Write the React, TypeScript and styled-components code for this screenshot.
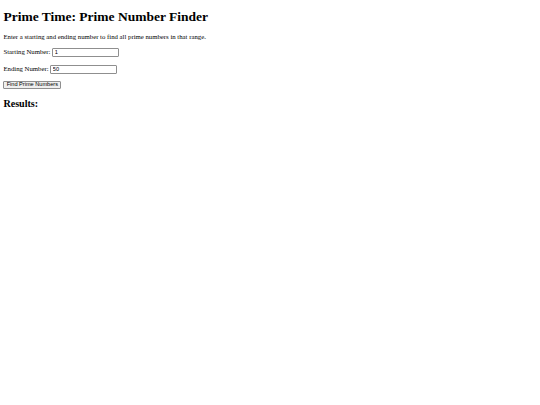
import React from "react";
import styled, { createGlobalStyle } from "styled-components";

const Global = createGlobalStyle`
  html, body { margin: 0; padding: 0; background: #fff; }
  body { font-family: "Liberation Serif", "Times New Roman", serif; color: #000; }
`;

const Page = styled.div`
  padding: 0 3.4px;
  display: flow-root;
`;

const Title = styled.h1`
  font-size: 13.5px;
  line-height: 15px;
  font-weight: bold;
  margin: 8.5px 0 0;
`;

const Text = styled.p`
  margin: 9px 0 0;
  font-size: 6.75px;
  line-height: 8px;
`;

const Field = styled.div<{ $gap: number }>`
  margin-top: ${(p) => p.$gap}px;
  height: 9px;
  display: flex;
  align-items: center;
  font-size: 6.75px;
  line-height: 8px;
`;

const Label = styled.label`
  margin-right: 1.7px;
`;

const Input = styled.input`
  box-sizing: border-box;
  width: 67px;
  height: 9px;
  margin: 0;
  padding: 0 1.5px;
  border: 1px solid #8f8f8f;
  border-radius: 1px;
  background: #fff;
  font-family: "Liberation Sans", Arial, sans-serif;
  font-size: 5.6px;
  color: #000;
  outline: none;
`;

const Button = styled.button`
  display: block;
  box-sizing: border-box;
  height: 8.6px;
  margin: 7px 0 0;
  padding: 0 2.3px;
  border: 1px solid #8f8f8f;
  border-radius: 1px;
  background: #efefef;
  font-family: "Liberation Sans", Arial, sans-serif;
  font-size: 5.6px;
  line-height: 1;
  color: #000;
`;

const Sub = styled.h2`
  font-size: 10.1px;
  line-height: 11px;
  font-weight: bold;
  margin: 8.5px 0 0;
`;

export default function App() {
  return (
    <Page>
      <Global />
      <Title>Prime Time: Prime Number Finder</Title>
      <Text>Enter a starting and ending number to find all prime numbers in that range.</Text>
      <Field $gap={7}>
        <Label htmlFor="start">Starting Number:</Label>
        <Input id="start" type="text" defaultValue="1" />
      </Field>
      <Field $gap={8}>
        <Label htmlFor="end">Ending Number:</Label>
        <Input id="end" type="text" defaultValue="50" />
      </Field>
      <Button>Find Prime Numbers</Button>
      <Sub>Results:</Sub>
    </Page>
  );
}
